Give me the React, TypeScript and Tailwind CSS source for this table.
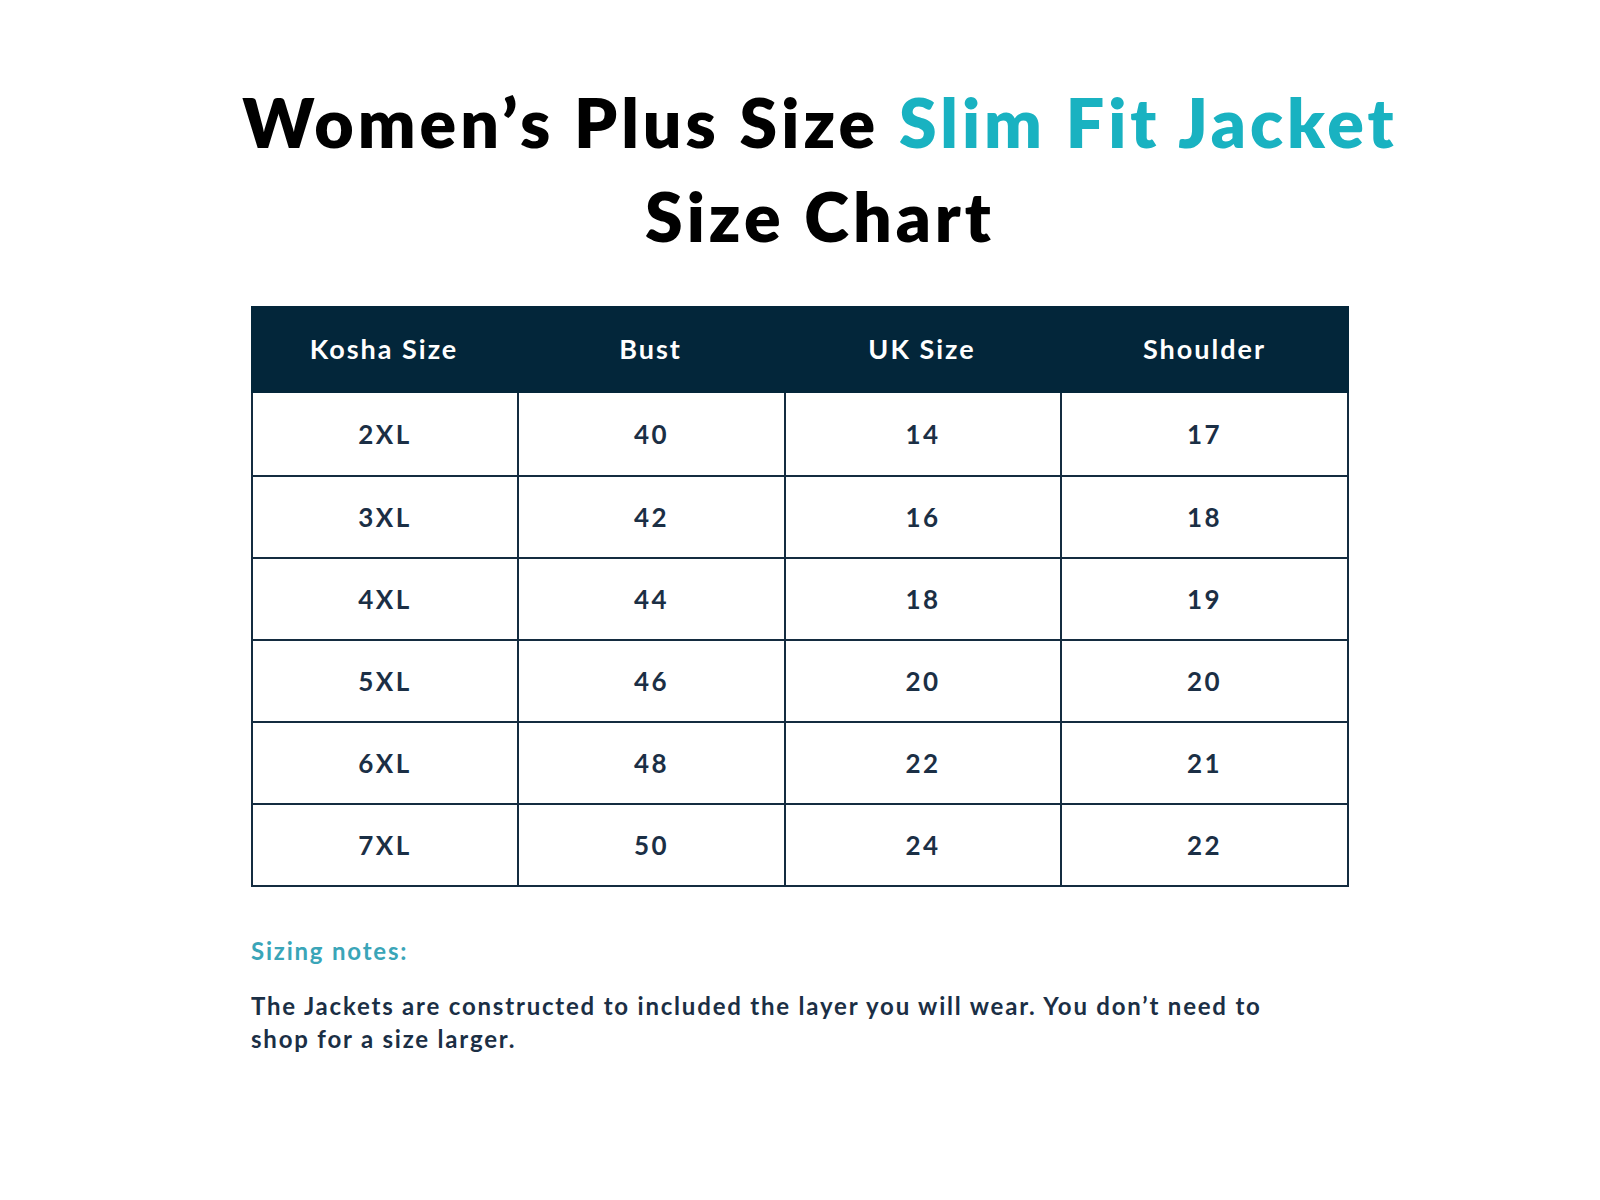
const rows = [
  ["2XL", "40", "14", "17"],
  ["3XL", "42", "16", "18"],
  ["4XL", "44", "18", "19"],
  ["5XL", "46", "20", "20"],
  ["6XL", "48", "22", "21"],
  ["7XL", "50", "24", "22"],
];

const headers = ["Kosha Size", "Bust", "UK Size", "Shoulder"];
const colWidths = ["w-[264px]", "w-[267px]", "w-[276px]", "flex-1"];
const headWidths = ["w-[266px]", "w-[267px]", "w-[276px]", "flex-1"];

export default function App() {
  return (
    <div className="min-h-screen w-[1600px] bg-white font-['Lato',_sans-serif]">
      {/* Title */}
      <div className="pt-[75px] pl-10 text-center text-[68px] font-extrabold leading-[94px] tracking-[4px] text-black">
        <div>
          Women’s Plus Size <span className="text-[#19b2c1]">Slim Fit Jacket</span>
        </div>
        <div>Size Chart</div>
      </div>

      {/* Table */}
      <div className="mx-auto mt-[43px] w-[1098px]">
        <div className="flex h-[87px] items-center bg-[#03263a] text-[27px] font-bold tracking-[2px] text-white">
          {headers.map((h, i) => (
            <div key={h} className={`${headWidths[i]} text-center`}>
              {h}
            </div>
          ))}
        </div>
        <div className="border-x-2 border-b-2 border-[#142c40]">
          {rows.map((r, ri) => (
            <div
              key={ri}
              className={`flex h-[82px] ${ri > 0 ? "border-t-2 border-[#142c40]" : ""}`}
            >
              {r.map((c, ci) => (
                <div
                  key={ci}
                  className={`${colWidths[ci]} flex items-center justify-center text-[26px] font-bold tracking-[2.5px] text-[#1b2f45] ${ci > 0 ? "border-l-2 border-[#142c40]" : ""}`}
                >
                  {c}
                </div>
              ))}
            </div>
          ))}
        </div>

        {/* Notes */}
        <div className="mt-[46px] text-[24px] font-bold tracking-[1.8px] text-[#3aa5b8]">Sizing notes:</div>
        <p className="mt-[20px] w-[1040px] text-[24px] font-bold leading-[33px] tracking-[1.8px] text-[#1b2f45]">
          The Jackets are constructed to included the layer you will wear. You don’t need to shop for a size larger.
        </p>
      </div>
    </div>
  );
}
